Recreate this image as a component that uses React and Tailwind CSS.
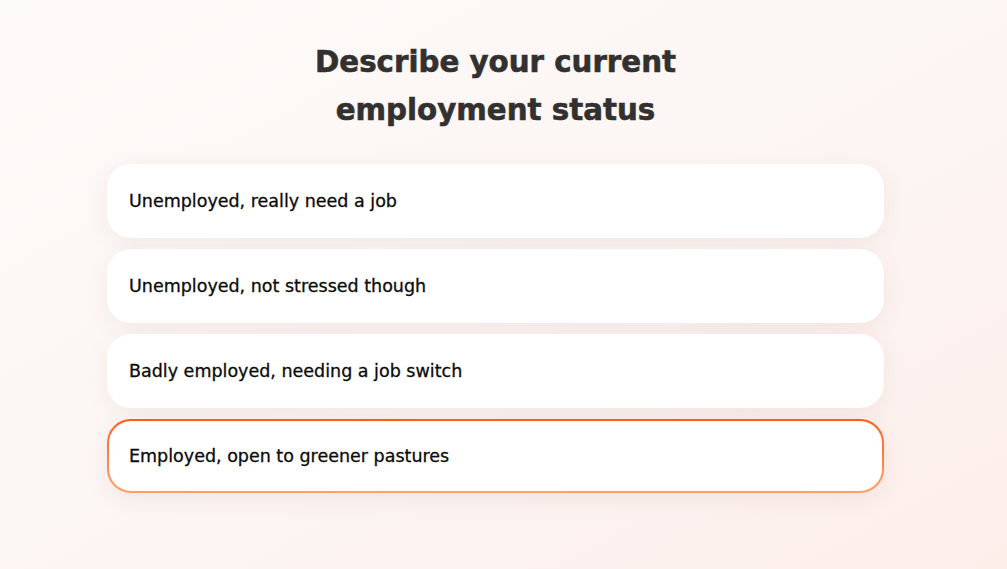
const options = [
  "Unemployed, really need a job",
  "Unemployed, not stressed though",
  "Badly employed, needing a job switch",
  "Employed, open to greener pastures",
]

export default function App() {
  const selected = 3

  return (
    <div
      className="min-h-[569px] w-full bg-gradient-to-br from-[#fcfaf9] via-[#fcf6f4] to-[#fdeeea] pt-[38px]"
      style={{ fontFamily: "'DejaVu Sans', Inter, sans-serif" }}
    >
      <div className="ml-[107px] w-[777px]">
        <h1 className="text-center text-[29.3px] font-bold leading-[48px] text-[#323130] [-webkit-text-stroke:0.6px_#323130]">
          Describe your current
          <br />
          employment status
        </h1>

        <div className="mt-[30px] flex flex-col gap-[11px]">
          {options.map((label, i) =>
            i === selected ? (
              <div
                key={label}
                className="rounded-[24px] bg-gradient-to-b from-[#ff5d0c] to-[#ff9f6a] p-[2px] shadow-[0_6px_24px_rgba(120,60,40,0.08)]"
              >
                <div className="flex h-[70px] items-center rounded-[22px] bg-white pl-[20px] text-[17.5px] text-[#0b0b0b] [-webkit-text-stroke:0.3px_#0b0b0b]">
                  {label}
                </div>
              </div>
            ) : (
              <div
                key={label}
                className="flex h-[74px] items-center rounded-[24px] bg-white pl-[22px] text-[17.5px] text-[#0b0b0b] [-webkit-text-stroke:0.3px_#0b0b0b] shadow-[0_6px_24px_rgba(120,60,40,0.07)]"
              >
                {label}
              </div>
            )
          )}
        </div>
      </div>
    </div>
  )
}
